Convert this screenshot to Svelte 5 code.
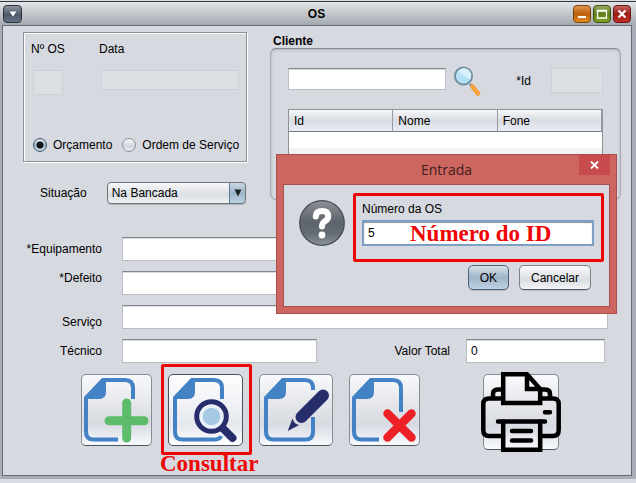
<script>
  let tipo = $state('orcamento');
  let situacao = $state('Na Bancada');
  let numero = $state('5');
  let valor = $state('0');
</script>

{#snippet fold()}
  <path d="M3 25V23L21 4H25V18Q25 25 18 25Z" fill="#4382c4" />
{/snippet}

<main class="frame">
  <header class="titlebar">
    <button class="wbtn menu" aria-label="Menu">
      <svg width="8" height="6" viewBox="0 0 8 6"><path d="M0.5 0.5H7.5L4 5.5Z" fill="#fff" /></svg>
    </button>
    <h1>OS</h1>
    <div class="controls">
      <button class="wbtn min" aria-label="Minimizar">
        <svg width="14" height="14" viewBox="0 0 14 14"><path d="M3 10H11" stroke="#fff" stroke-width="2" /></svg>
      </button>
      <button class="wbtn max" aria-label="Maximizar">
        <svg width="14" height="14" viewBox="0 0 14 14"><path d="M2.5 3.5H11.5V11H2.5ZM2.5 4H11.5" fill="none" stroke="#fff" stroke-width="1.3" /></svg>
      </button>
      <button class="wbtn close" aria-label="Fechar">
        <svg width="14" height="14" viewBox="0 0 14 14"><path d="M3.5 3.5L10.5 10.5M10.5 3.5L3.5 10.5" stroke="#fff" stroke-width="2.2" /></svg>
      </button>
    </div>
  </header>

  <section class="content">
    <div class="top">
      <div class="left">
        <div class="box">
          <div class="fields">
            <div class="col os">
              <label for="nos">Nº OS</label>
              <input id="nos" class="off tall" disabled />
            </div>
            <div class="col data">
              <label for="data">Data</label>
              <input id="data" class="off" disabled />
            </div>
          </div>
          <div class="radios">
            <label><input type="radio" name="tipo" value="orcamento" bind:group={tipo} />Orçamento</label>
            <label><input type="radio" name="tipo" value="ordem" bind:group={tipo} />Ordem de Serviço</label>
          </div>
        </div>
        <div class="situacao">
          <label for="sit">Situação</label>
          <span class="combo">
            <select id="sit" bind:value={situacao}>
              <option>Na Bancada</option>
            </select>
            <svg class="arrow" width="8" height="8" viewBox="0 0 8 8"><path d="M0.5 0.5H7.5L4 7.5Z" fill="#1b2226" /></svg>
          </span>
        </div>
      </div>

      <div class="cliente">
        <h2>Cliente</h2>
        <div class="group">
          <div class="search">
            <input class="field" aria-label="Pesquisar cliente" />
            <svg width="28" height="30" viewBox="0 0 28 30">
              <path d="M17 18L19.5 21.5" stroke="#6d8797" stroke-width="2.5" />
              <path d="M19.5 20.5L25 27.5" stroke="#f7a23b" stroke-width="4.5" stroke-linecap="round" />
              <circle cx="10.5" cy="10" r="8.6" fill="#b5e2f8" stroke="#7390a0" stroke-width="2" />
              <path d="M5 5.5A7.2 7.2 0 0 1 17 13.5Z" fill="#d8f1fc" />
            </svg>
            <label for="cid">*Id</label>
            <input id="cid" class="off tall" disabled />
          </div>
          <table>
            <thead>
              <tr><th>Id</th><th>Nome</th><th>Fone</th></tr>
            </thead>
            <tbody>
              <tr><td></td><td></td><td></td></tr>
              <tr><td></td><td></td><td></td></tr>
              <tr><td></td><td></td><td></td></tr>
            </tbody>
          </table>
        </div>
      </div>
    </div>

    <form class="form" onsubmit={(e) => e.preventDefault()}>
      <label for="equip">*Equipamento</label>
      <input id="equip" class="field" />
      <label for="defeito" class="start">*Defeito</label>
      <input id="defeito" class="field" />
      <label for="servico" class="end">Serviço</label>
      <input id="servico" class="field" />
      <label for="tecnico">Técnico</label>
      <div class="split">
        <input id="tecnico" class="field" />
        <label for="total">Valor Total</label>
        <input id="total" class="field" bind:value={valor} />
      </div>
    </form>

    <div class="actions">
      <button class="tool" aria-label="Adicionar">
        <svg width="71" height="72" viewBox="0 0 71 72">
          {@render fold()}
          <path d="M5 23V58Q5 65.5 12.5 65.5H37M22 6H44Q52 6 52 14V25" fill="none" stroke="#4382c4" stroke-width="4" />
          <path d="M45.7 29V64M28 46.7H63" stroke="#5cbc6b" stroke-width="9" stroke-linecap="round" />
        </svg>
      </button>

      <div class="marked">
        <button class="tool wide focus" aria-label="Consultar">
          <svg width="71" height="72" viewBox="0 0 71 72">
            {@render fold()}
            <path d="M5 23V58Q5 65.5 12.5 65.5H44Q50 65.5 51 62M22 6H44Q52 6 52 14V25" fill="none" stroke="#4382c4" stroke-width="4" />
            <path d="M52 53.5L62.5 64" stroke="#272c6b" stroke-width="8" stroke-linecap="round" />
            <circle cx="41.5" cy="42.5" r="14.8" fill="#e9f0f8" stroke="#272c6b" stroke-width="5" />
            <circle cx="41.5" cy="42.5" r="8.8" fill="#a5c9e3" />
          </svg>
        </button>
        <span class="ring"></span>
        <strong class="note caption">Consultar</strong>
      </div>

      <button class="tool mid" aria-label="Editar">
        <svg width="71" height="72" viewBox="0 0 71 72">
          {@render fold()}
          <path d="M52 43V58Q52 65.5 44.5 65.5H12.5Q5 65.5 5 58V23M22 6H44Q52 6 52 14V16" fill="none" stroke="#4382c4" stroke-width="4" />
          <path d="M62 21.5L40.5 43" stroke="#272c6b" stroke-width="12" stroke-linecap="round" />
          <path d="M26.7 57L31.5 44.5Q33 50 38.2 51Z" fill="#272c6b" />
        </svg>
      </button>

      <button class="tool" aria-label="Excluir">
        <svg width="71" height="72" viewBox="0 0 71 72">
          {@render fold()}
          <path d="M5 23V58Q5 65.5 12.5 65.5H30M22 6H44Q52 6 52 14V38" fill="none" stroke="#4382c4" stroke-width="4" />
          <path d="M38.5 39.5L62.5 63.5M62.5 39.5L38.5 63.5" stroke="#ee2027" stroke-width="8.5" stroke-linecap="round" />
        </svg>
      </button>

      <button class="tool print" aria-label="Imprimir">
        <svg width="80" height="80" viewBox="0 0 80 80" fill="none" stroke="#000" stroke-width="4.5" stroke-linecap="round" stroke-linejoin="round">
          <path d="M22 64H8Q2.3 64 2.3 58V32Q2.3 26.5 8 26.5H22M59 26.5H72Q77.7 26.5 77.7 32V58Q77.7 64 72 64H59" />
          <path d="M12 25V22Q12 17.5 17 17.5H21M60 17.5H64Q69 17.5 69 22V25" />
          <path d="M22.2 2.3H46L59.2 17V31H22.2ZM46 2.3V17H59.2" stroke-linejoin="miter" />
          <path d="M17 49.5H64M64 40.3H69M31 59H50M31 68.5H50" />
          <path d="M22.2 49.5V77.7H59.2V49.5" stroke-linejoin="miter" />
        </svg>
      </button>
    </div>
  </section>

  <div class="dialog" role="dialog" aria-labelledby="dlg">
    <div class="dtitle">
      <h2 id="dlg">Entrada</h2>
      <button class="x" aria-label="Fechar diálogo">
        <svg width="9" height="8" viewBox="0 0 9 8"><path d="M1 0.5L8 7.5M8 0.5L1 7.5" stroke="#fff" stroke-width="1.8" /></svg>
      </button>
    </div>
    <div class="dbody">
      <div class="ask">
        <svg width="46" height="46" viewBox="0 0 46 46">
          <defs>
            <linearGradient id="q" x1="0" y1="0" x2="0" y2="1">
              <stop offset="0" stop-color="#8b9096" />
              <stop offset="0.48" stop-color="#5e646b" />
              <stop offset="0.75" stop-color="#666c73" />
              <stop offset="1" stop-color="#8c949d" />
            </linearGradient>
          </defs>
          <circle cx="23" cy="23" r="22.3" fill="url(#q)" stroke="#454b53" stroke-width="1.2" />
          <path d="M16.8 16.5Q17 11 23 11Q29.2 11 29.2 16.2Q29.2 19.4 25.8 21.3Q23 23 23 26.5" fill="none" stroke="#fff" stroke-width="6" stroke-linecap="round" />
          <circle cx="23" cy="35" r="3.4" fill="#fff" />
        </svg>
        <div class="entry">
          <label for="num">Número da OS</label>
          <div class="numwrap">
            <input id="num" bind:value={numero} />
            <strong class="note hint">Número do ID</strong>
          </div>
        </div>
      </div>
      <div class="dbuttons">
        <button class="btn default">OK</button>
        <button class="btn">Cancelar</button>
      </div>
    </div>
  </div>
</main>

<style>
  :global(body) {
    margin: 0;
    background: #d9dce2;
  }
  * {
    box-sizing: border-box;
  }
  .frame {
    position: relative;
    margin-top: 1px;
    border-top: 1px solid #2f3c3e;
    padding: 0 4px 3px 2px;
    background: #a8adb7;
    font: 12px/14px "Liberation Sans", Arial, sans-serif;
    color: #000;
  }
  h1,
  h2 {
    margin: 0;
    font-size: 12px;
    line-height: 14px;
  }
  button {
    padding: 0;
    font: inherit;
    color: inherit;
  }
  svg {
    display: block;
    flex: none;
  }
  .titlebar {
    display: flex;
    align-items: center;
    height: 23px;
    margin: 0 -4px 0 -2px;
    padding: 0 5px 0 3px;
    background: linear-gradient(#e3e5e8, #c9ccd1 40%, #a5aab2);
  }
  h1 {
    flex: 1;
    padding-left: 38px;
    text-align: center;
  }
  .wbtn {
    display: flex;
    align-items: center;
    justify-content: center;
    width: 18px;
    height: 18px;
    border: 1px solid #333;
    border-radius: 4px;
  }
  .menu {
    width: 19px;
    border-color: #2c333f;
    background: linear-gradient(#8d95a3, #4c5768 55%, #667286);
  }
  .controls {
    display: flex;
    gap: 2px;
  }
  .min {
    border-color: #7d4310;
    background: linear-gradient(#dd9650, #bd5f0c 50%, #e18a20);
  }
  .max {
    border-color: #3c5213;
    background: linear-gradient(#98ab62, #5f7d16 50%, #81a224);
  }
  .close {
    border-color: #661615;
    background: linear-gradient(#c66863, #9c1a13 50%, #c33026);
  }
  .content {
    border: 1px solid #656b77;
    padding: 6px 10px 25px 20px;
    background: #d6d9df;
  }
  .top {
    display: flex;
    gap: 23px;
  }
  .left {
    flex: none;
    width: 224px;
  }
  .box {
    height: 130px;
    border: 1px solid #8d9096;
    padding: 9px 7px;
    box-shadow: inset 1px 1px #fff, 1px 1px #fff;
    display: flex;
    flex-direction: column;
    justify-content: space-between;
  }
  .fields {
    display: flex;
  }
  .col {
    display: flex;
    flex-direction: column;
    gap: 14px;
  }
  .col input {
    margin-left: 2px;
  }
  .os {
    flex: none;
    width: 68px;
  }
  .os input {
    width: 30px;
  }
  .data {
    flex: 1;
    min-width: 0;
  }
  input {
    min-width: 0;
    margin: 0;
    border-radius: 0;
    font: inherit;
    color: inherit;
    outline: none;
  }
  .off {
    height: 20px;
    border: 1px solid #cdd0d5;
    background: #dcdfe3;
  }
  .off.tall {
    height: 25px;
  }
  .field {
    height: 24px;
    padding: 0 4px;
    border: 1px solid #b9bcc2;
    border-top-color: #82868e;
    background: #fff;
    box-shadow: inset 0 1px #d9dbde;
  }
  .radios {
    display: flex;
    gap: 10px;
    padding-left: 2px;
    white-space: nowrap;
  }
  .radios label {
    display: flex;
    align-items: center;
    gap: 6px;
  }
  input[type="radio"] {
    appearance: none;
    width: 14px;
    height: 14px;
    border: 1px solid #8a8f98;
    border-radius: 50%;
    background: linear-gradient(#f8f9fa, #d2d5db 60%, #eceef1);
  }
  input[type="radio"]:checked {
    border-color: #3f5468;
    background: radial-gradient(circle, #10151a 3px, transparent 4px), linear-gradient(#dfe8ef, #a0b8cb 50%, #c2d5e3);
  }
  .situacao {
    display: flex;
    align-items: center;
    gap: 20px;
    margin-top: 20px;
    padding: 0 1px 0 17px;
  }
  .combo {
    position: relative;
    flex: 1;
    display: flex;
  }
  select {
    appearance: none;
    width: 100%;
    height: 22px;
    padding: 0 20px 0 4px;
    border: 1px solid #6d727b;
    border-radius: 4px;
    background:
      linear-gradient(90deg, #5f7c94 1px, transparent 1px) right / 16px 100% no-repeat,
      linear-gradient(#cbd9e4, #9db6ca 50%, #bdd2e2) right / 16px 100% no-repeat,
      linear-gradient(#f8f8fa, #dadde2 60%, #f0f2f5);
    box-shadow: 0 1px #b2b6bd;
    font: inherit;
    color: inherit;
  }
  .arrow {
    position: absolute;
    right: 4px;
    top: 7px;
    pointer-events: none;
  }
  .cliente {
    flex: 1;
    min-width: 0;
  }
  .cliente h2 {
    padding: 2px 3px 0;
  }
  .group {
    height: 152px;
    border: 1px solid #a5a8af;
    border-top-color: #85898f;
    border-radius: 6px;
    padding: 17px 17px 0;
    box-shadow: inset 0 1px 3px #b0b3ba;
    overflow: hidden;
  }
  .search {
    display: flex;
    height: 43px;
    align-items: flex-start;
  }
  .search .field {
    flex: 1;
    height: 22px;
    margin: 2px 7px 0 0;
  }
  .search label {
    margin: 8px 20px 0 35px;
  }
  .search .off {
    width: 52px;
    margin-top: 2px;
  }
  table {
    width: 100%;
    border: 1px solid #8d9198;
    border-spacing: 0;
    table-layout: fixed;
    background: #fff;
  }
  th {
    height: 22px;
    padding: 0 5px;
    border-right: 1px solid #969ba4;
    border-bottom: 1px solid #737983;
    background: linear-gradient(#f6f7f8, #d9dce2 50%, #eaedf3);
    font-weight: normal;
    text-align: left;
  }
  td {
    height: 16px;
    padding: 0;
  }
  tbody tr:nth-child(even) {
    background: #f2f2f2;
  }
  .form {
    display: grid;
    grid-template-columns: 79px 1fr;
    column-gap: 20px;
    row-gap: 10px;
    margin: 33px 13px 0 0;
    align-items: center;
  }
  .form > label {
    text-align: right;
  }
  .form .start {
    align-self: start;
  }
  .form .end {
    align-self: end;
  }
  .split {
    display: flex;
    align-items: center;
    padding-right: 3px;
  }
  #tecnico {
    flex: 197;
  }
  .split label {
    flex: none;
    margin: 0 16px 0 77px;
  }
  #total {
    flex: 137;
  }
  .actions {
    display: flex;
    align-items: flex-start;
    gap: 16px;
    margin-top: 11px;
    padding: 0 62px 0 58px;
  }
  .tool {
    display: flex;
    align-items: center;
    justify-content: center;
    flex: none;
    width: 71px;
    height: 72px;
    border: 1px solid #878c94;
    border-bottom-color: #4d525a;
    border-radius: 5px;
    background: linear-gradient(#f8f9fb, #e3e5e9 45%, #d7dae0 70%, #f7f9fd);
  }
  .tool.wide {
    width: 75px;
  }
  .tool.mid {
    width: 74px;
  }
  .tool.focus {
    border-color: #4d525a;
    background: linear-gradient(#fdfdfe, #eff1f5 45%, #e4e7ed 70%, #fff);
  }
  .tool.print {
    width: 76px;
    height: 76px;
    margin-left: auto;
  }
  .marked {
    position: relative;
  }
  .ring {
    position: absolute;
    inset: -10px -9px -9px -7px;
    border: 3px solid #ee0606;
    border-radius: 2px;
    pointer-events: none;
  }
  .note {
    position: absolute;
    font: bold 23px/24px "Liberation Serif", "Times New Roman", serif;
    color: #ee0606;
    white-space: nowrap;
    pointer-events: none;
  }
  .caption {
    left: -8px;
    top: 78px;
  }
  .dialog {
    position: absolute;
    top: 152px;
    right: 19px;
    width: 341px;
    border: 1px solid #a94e4a;
    padding: 0 6px 6px;
    background: #cd665f;
  }
  .dtitle {
    display: flex;
    align-items: flex-start;
    height: 29px;
  }
  .dtitle h2 {
    flex: 1;
    padding: 5px 0 0 31px;
    font: 14px/20px "Open Sans", "Noto Sans", sans-serif;
    color: #40201e;
    text-align: center;
  }
  .x {
    display: flex;
    align-items: center;
    justify-content: center;
    width: 31px;
    height: 20px;
    border: 0;
    background: #c84c4d;
  }
  .dbody {
    height: 123px;
    border: 1px solid #a94e4a;
    padding: 8px 5px 0 15px;
    background: #d6d9df;
  }
  .ask {
    display: flex;
    gap: 8px;
  }
  .ask svg {
    margin-top: 7px;
  }
  .entry {
    flex: 1;
    height: 69px;
    border: 3px solid #ee0606;
    border-radius: 2px;
    padding: 6px 7px 0 6px;
  }
  .entry label {
    display: block;
  }
  .numwrap {
    position: relative;
    margin-top: 4px;
  }
  #num {
    display: block;
    width: 100%;
    height: 26px;
    padding: 0 4px;
    border: 2px solid #7ba0c4;
    background: #fff;
    box-shadow: inset 0 1px 1px #8d9197;
  }
  .hint {
    left: 48px;
    top: 2px;
  }
  .dbuttons {
    display: flex;
    justify-content: flex-end;
    gap: 10px;
    padding: 3px 13px 0 0;
  }
  .btn {
    height: 25px;
    padding: 0 11px;
    border: 1px solid #7b7f87;
    border-bottom-color: #555a62;
    border-radius: 5px;
    background: linear-gradient(#fafafb, #dadde2 60%, #f2f4f7);
    box-shadow: 0 1px #b8bcc3;
  }
  .default {
    border-color: #4a6177;
    background: linear-gradient(#d7e1e9, #9fb6c9 50%, #bdd1e1);
  }
</style>
